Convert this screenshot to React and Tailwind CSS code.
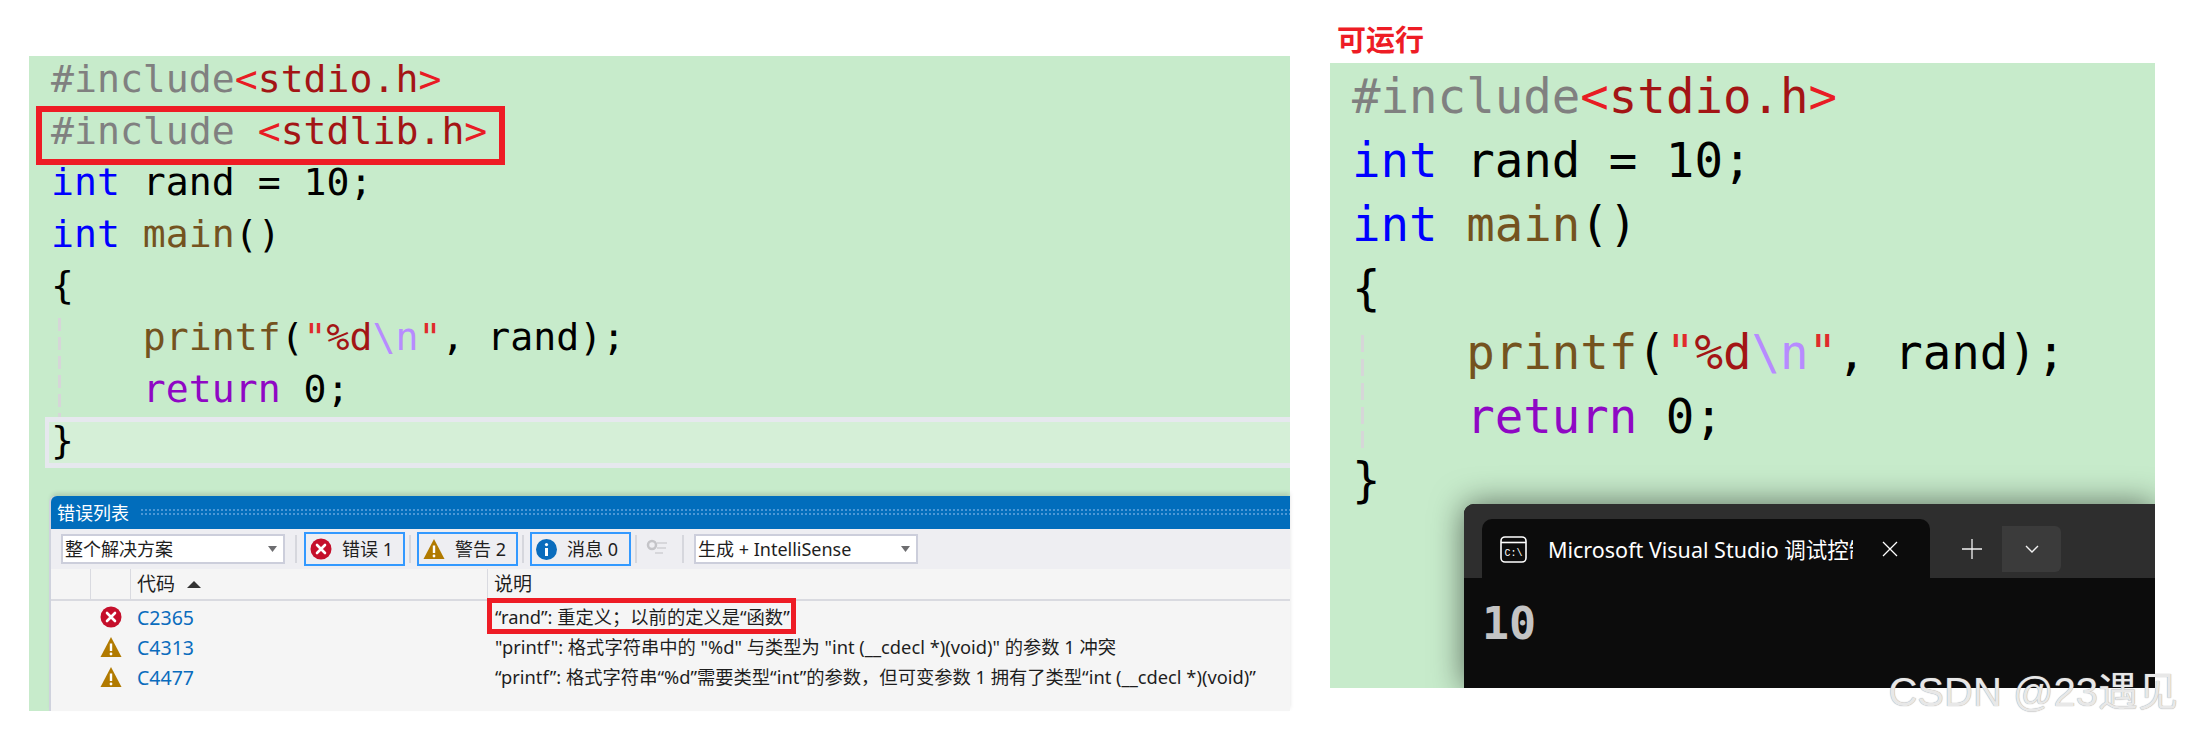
import React from 'react';

const uiFont = "font-['Noto_Sans','Noto_Sans_CJK_SC',sans-serif]";

const C = {
  gray: 'text-[#808080]',
  angle: 'text-[#e81c24]',
  str: 'text-[#a31515]',
  quote: 'text-[#e02b2b]',
  kw: 'text-[#0000ff]',
  fn: 'text-[#74531f]',
  flow: 'text-[#8f08c4]',
  esc: 'text-[#b78bff]',
  ink: 'text-black',
};

const L = (c, t) => ({ c, t });

const includeStdio = [L(C.gray, '#include'), L(C.angle, '<'), L(C.str, 'stdio.h'), L(C.angle, '>')];
const includeStdlib = [L(C.gray, '#include '), L(C.angle, '<'), L(C.str, 'stdlib.h'), L(C.angle, '>')];
const randDecl = [L(C.kw, 'int'), L(C.ink, ' rand = 10;')];
const mainDecl = [L(C.kw, 'int'), L(C.ink, ' '), L(C.fn, 'main'), L(C.ink, '()')];
const printfLine = [
  L(C.fn, '    printf'),
  L(C.ink, '('),
  L(C.quote, '"'),
  L(C.str, '%d'),
  L(C.esc, '\\n'),
  L(C.quote, '"'),
  L(C.ink, ', rand);'),
];
const returnLine = [L(C.flow, '    return'), L(C.ink, ' 0;')];

const CodeLine = ({ parts, className = '' }) => (
  <div className={`whitespace-pre ${className}`}>
    {parts.map((p, i) => (
      <span key={i} className={p.c}>
        {p.t}
      </span>
    ))}
  </div>
);

const ErrorIcon = ({ size = 22 }) => (
  <svg width={size} height={size} viewBox="0 0 22 22" className="shrink-0">
    <circle cx="11" cy="11" r="10.5" fill="#c50f2b" />
    <path d="M7 7l8 8M15 7l-8 8" stroke="#fff" strokeWidth="2.6" strokeLinecap="round" />
  </svg>
);

const WarnIcon = ({ size = 22 }) => (
  <svg width={size} height={size} viewBox="0 0 22 22" className="shrink-0">
    <path d="M11 1L21.5 21H.5z" fill="#b17a00" />
    <path d="M11 7.5v7.5" stroke="#fff" strokeWidth="2.4" />
    <circle cx="11" cy="18" r="1.4" fill="#fff" />
  </svg>
);

const InfoIcon = () => (
  <svg width="21" height="21" viewBox="0 0 21 21" className="shrink-0">
    <circle cx="10.5" cy="10.5" r="10.5" fill="#0a6cbd" />
    <circle cx="10.5" cy="5.6" r="1.6" fill="#fff" />
    <path d="M10.5 9v8" stroke="#fff" strokeWidth="3" />
  </svg>
);

const Caret = () => (
  <svg width="9" height="6" viewBox="0 0 9 6" className="shrink-0">
    <path d="M0 0h9L4.500 6z" fill="#6d6d70" />
  </svg>
);

const Combo = ({ label, className }) => (
  <div className={`flex h-[30px] items-center justify-between border-2 border-[#cccedb] bg-white pl-[2px] pr-[6px] ${className}`}>
    <span className="leading-none">{label}</span>
    <Caret />
  </div>
);

const Sep = () => <div className="h-[28px] w-[2px] bg-[#d6d7dd]" />;

const FilterToggle = ({ icon, label }) => (
  <div className="flex h-[34px] w-[101px] items-center gap-[10px] border-2 border-[#3399ff] pl-[4px]">
    {icon}
    <span className="leading-none">{label}</span>
  </div>
);

const rows = [
  { icon: <ErrorIcon />, code: 'C2365', text: '“rand”: 重定义；以前的定义是“函数”' },
  { icon: <WarnIcon />, code: 'C4313', text: '"printf": 格式字符串中的 "%d" 与类型为 "int (__cdecl *)(void)" 的参数 1 冲突' },
  { icon: <WarnIcon />, code: 'C4477', text: '“printf”: 格式字符串“%d”需要类型“int”的参数，但可变参数 1 拥有了类型“int (__cdecl *)(void)”' },
];

const ErrorList = () => (
  <div className={`relative ml-[22px] mt-[28px] flex min-h-0 flex-1 flex-col rounded-tl-[6px] shadow-[-2px_0_0_#cfd2dd,0_-3px_4px_rgba(0,0,0,0.12)] ${uiFont} text-[18px] text-[#1e1e1e]`}>
    <div className="flex h-[33px] shrink-0 items-center gap-[11px] rounded-tl-[6px] bg-[#016dbc] pl-[6px] text-white">
      <span className="leading-none">错误列表</span>
      <div className="h-[9px] flex-1 bg-[radial-gradient(circle,#4b97d6_1px,transparent_1.2px)] bg-[length:4px_4px]" />
    </div>
    <div className="flex h-[40px] shrink-0 items-center bg-[#eeeef2] pl-[10px]">
      <Combo label="整个解决方案" className="w-[224px]" />
      <div className="ml-[10px]"><Sep /></div>
      <div className="ml-[7px]">
        <FilterToggle icon={<ErrorIcon />} label="错误 1" />
      </div>
      <div className="ml-[4px]"><Sep /></div>
      <div className="ml-[6px]">
        <FilterToggle icon={<WarnIcon />} label="警告 2" />
      </div>
      <div className="ml-[4px]"><Sep /></div>
      <div className="ml-[6px]">
        <FilterToggle icon={<InfoIcon />} label="消息 0" />
      </div>
      <div className="ml-[4px]"><Sep /></div>
      <svg width="22" height="20" viewBox="0 0 22 20" className="ml-[9px] shrink-0">
        <circle cx="6" cy="6" r="4" fill="none" stroke="#c4c4c8" strokeWidth="2.500" />
        <path d="M11 4h10M11 9h9M9 14h8" stroke="#d0d0d4" strokeWidth="1.500" />
      </svg>
      <div className="ml-[14px]"><Sep /></div>
      <Combo label="生成 + IntelliSense" className="ml-[10px] w-[224px]" />
    </div>
    <div className="flex h-[32px] shrink-0 items-center border-b-2 border-[#d9dae0] bg-[#f5f5f5] pl-[3px]">
      <div className="h-full w-[37px] border-r border-[#d9dae0]" />
      <div className="h-full w-[40px] border-r border-[#d9dae0]" />
      <div className="flex h-full w-[357px] items-center gap-[12px] border-r border-[#d9dae0] pl-[6px]">
        <span className="text-[19px] leading-none">代码</span>
        <svg width="14" height="7" viewBox="0 0 14 7">
          <path d="M0 7L7 0l7 7z" fill="#333" />
        </svg>
      </div>
      <div className="pl-[6px] text-[19px] leading-none">说明</div>
    </div>
    <div className="flex-1 bg-[#f5f5f5] pt-[1px]">
      {rows.map((r) => (
        <div key={r.code} className="flex h-[30px] items-center">
          <div className="flex w-[71px] justify-end">{r.icon}</div>
          <div className="w-[373px] pl-[15px] text-[19.5px] text-[#0a6cbd]">{r.code}</div>
          <div className="whitespace-nowrap text-[18.3px]">{r.text}</div>
        </div>
      ))}
    </div>
    {/* red annotation around the first message */}
    <div className="absolute left-[436px] top-[102px] h-[36px] w-[309px] border-[5px] border-[#ee1c25]" />
  </div>
);

const LeftPanel = () => (
  <div className="relative ml-[29px] mt-[56px] flex h-[655px] w-[1261px] flex-col bg-[#c7ebcb]">
    <div className="font-['DejaVu_Sans_Mono',monospace] text-[38.15px] leading-[51.6px]">
      <div className="-mt-[2px] mb-[2px] pl-[22px]">
        <CodeLine parts={includeStdio} />
        <CodeLine parts={includeStdlib} />
        <CodeLine parts={randDecl} />
        <CodeLine parts={mainDecl} />
        <CodeLine parts={[L(C.ink, '{')]} />
        <CodeLine parts={printfLine} />
        <CodeLine parts={returnLine} />
      </div>
      <div className="ml-[16px] box-border h-[51px] border-y-[5px] border-l-[4px] border-[#e6e8ee] bg-[#d5efd7] pl-[2px] leading-[37px]">
        <CodeLine parts={[L(C.ink, '}')]} />
      </div>
    </div>
    {/* indent guide + red annotation sit over the code */}
    <div className="absolute left-[29px] top-[262px] h-[99px] w-[3px] bg-[repeating-linear-gradient(to_bottom,#d6d6d8_0_13px,transparent_13px_19px)]" />
    <div className="absolute left-[7px] top-[50px] h-[59px] w-[469px] border-[6px] border-[#ee1c25]" />
    <ErrorList />
  </div>
);

const Terminal = () => (
  <div className={`absolute bottom-0 left-[134px] right-0 h-[184px] rounded-tl-[10px] bg-[#0c0c0c] shadow-[0_0_32px_rgba(0,0,0,0.55)] ${uiFont}`}>
    <div className="flex h-[74px] items-end rounded-tl-[10px] bg-[#2e2e2e] pl-[18px]">
      <div className="flex h-[59px] w-[448px] items-start rounded-t-[10px] bg-[#0c0c0c] pl-[18px] pt-[17px] text-white">
        <svg width="27" height="27" viewBox="0 0 27 27" className="shrink-0">
          <rect x="1" y="1" width="25" height="25" rx="4" fill="none" stroke="#fff" strokeWidth="1.600" />
          <path d="M1 6.500h25" stroke="#fff" strokeWidth="1.600" />
          <text x="13.500" y="20" textAnchor="middle" fontSize="10" fontFamily="Liberation Mono" fill="#fff">C:\</text>
        </svg>
        <div className="ml-[21px] w-[305px] overflow-hidden whitespace-nowrap text-[21.5px] leading-[27px]">
          Microsoft Visual Studio 调试控制台
        </div>
        <svg width="16" height="16" viewBox="0 0 16 16" className="ml-[29px] mt-[5px] shrink-0">
          <path d="M1 1l14 14M15 1L1 15" stroke="#fff" strokeWidth="1.300" />
        </svg>
      </div>
      <div className="flex h-[68px] items-center self-start pt-[22px]">
        <svg width="20" height="20" viewBox="0 0 20 20" className="ml-[32px] shrink-0">
          <path d="M10 0v20M0 10h20" stroke="#f2f2f2" strokeWidth="1.300" />
        </svg>
        <div className="ml-[20px] flex h-[46px] w-[59px] items-center justify-center rounded-r-[6px] bg-[#3b3b3b]">
          <svg width="14" height="9" viewBox="0 0 14 9">
            <path d="M1 1l6 6 6-6" fill="none" stroke="#f2f2f2" strokeWidth="1.400" />
          </svg>
        </div>
      </div>
    </div>
    <div className="pl-[18px] pt-[16px] font-['DejaVu_Sans_Mono',monospace] text-[45px] font-bold leading-[60px] text-[#c4c4c4]">10</div>
  </div>
);

const RightColumn = () => (
  <div className="ml-[40px] flex h-[688px] w-[825px] flex-col">
    <div className={`pl-[7px] pt-[25px] ${uiFont} h-[63px] text-[29px] font-bold leading-[29px] text-[#ee1c25]`}>可运行</div>
    <div className="relative flex-1 overflow-hidden bg-[#c7ebcb] pl-[22px] pt-[2px] font-['DejaVu_Sans_Mono',monospace] text-[47.4px] leading-[64px]">
      <CodeLine parts={includeStdio} />
      <CodeLine parts={randDecl} />
      <CodeLine parts={mainDecl} />
      <CodeLine parts={[L(C.ink, '{')]} />
      <CodeLine parts={printfLine} />
      <CodeLine parts={returnLine} />
      <CodeLine parts={[L(C.ink, '}')]} />
      <div className="absolute left-[31px] top-[272px] h-[120px] w-[3px] bg-[repeating-linear-gradient(to_bottom,#d6d6d8_0_17px,transparent_17px_24px)]" />
      <Terminal />
    </div>
  </div>
);

export default function App() {
  return (
    <div className="relative flex h-[731px] w-[2186px] overflow-hidden bg-white">
      <LeftPanel />
      <RightColumn />
      {/* site watermark */}
      <div className="absolute bottom-[17px] right-[8px] font-['Liberation_Sans','Noto_Sans_CJK_SC',sans-serif] text-[40px] leading-[44px] text-[#e8e8e8] [text-shadow:0_0_1px_#888]">
        CSDN @23遇见
      </div>
    </div>
  );
}
